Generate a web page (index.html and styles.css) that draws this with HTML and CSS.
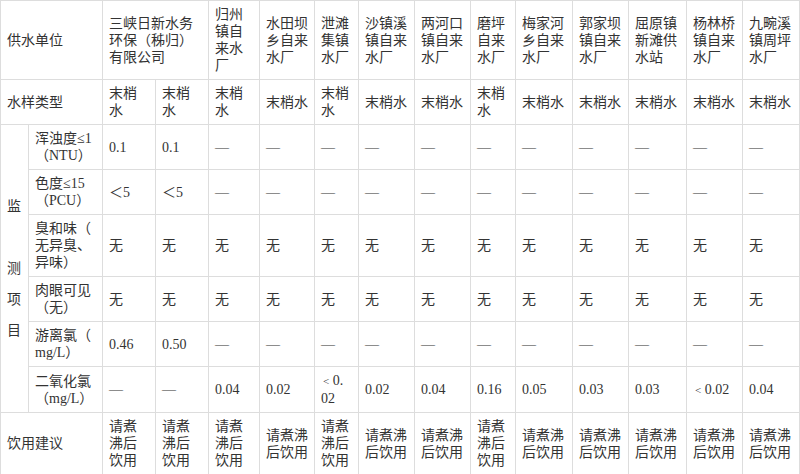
FILE: index.html
```html
<!DOCTYPE html>
<html lang="zh-CN">
<head>
<meta charset="utf-8">
<title>供水水质公示</title>
<link rel="stylesheet" href="styles.css">
</head>
<body>
<table class="quality">
  <colgroup>
    <col class="c28"><col class="c74">
    <col class="c53"><col class="c53">
    <col class="c51"><col class="c55"><col class="c44"><col class="c56"><col class="c56">
    <col class="c45"><col class="c57"><col class="c56"><col class="c58"><col class="c56"><col class="c57">
  </colgroup>
  <tbody>
    <tr>
      <td colspan="2">供水单位</td>
      <td colspan="2">三峡日新水务环保（秭归）有限公司</td>
      <td>归州镇自来水厂</td>
      <td>水田坝乡自来水厂</td>
      <td>泄滩集镇水厂</td>
      <td>沙镇溪镇自来水厂</td>
      <td>两河口镇自来水厂</td>
      <td>磨坪自来水厂</td>
      <td>梅家河乡自来水厂</td>
      <td>郭家坝镇自来水厂</td>
      <td>屈原镇新滩供水站</td>
      <td>杨林桥镇自来水厂</td>
      <td>九畹溪镇周坪水厂</td>
    </tr>
    <tr>
      <td colspan="2">水样类型</td>
      <td>末梢水</td><td>末梢水</td><td>末梢水</td><td>末梢水</td><td>末梢水</td><td>末梢水</td><td>末梢水</td>
      <td>末梢水</td><td>末梢水</td><td>末梢水</td><td>末梢水</td><td>末梢水</td><td>末梢水</td>
    </tr>
    <tr>
      <td rowspan="6" class="group">监<br><br>测<br>项<br>目</td>
      <td class="label">浑浊度≤1（NTU）</td>
      <td>0.1</td><td>0.1</td><td>—</td><td>—</td><td>—</td><td>—</td><td>—</td>
      <td>—</td><td>—</td><td>—</td><td>—</td><td>—</td><td>—</td>
    </tr>
    <tr>
      <td class="label">色度≤15（PCU）</td>
      <td>＜5</td><td>＜5</td><td>—</td><td>—</td><td>—</td><td>—</td><td>—</td>
      <td>—</td><td>—</td><td>—</td><td>—</td><td>—</td><td>—</td>
    </tr>
    <tr>
      <td class="label">臭和味（无异臭、异味）</td>
      <td>无</td><td>无</td><td>无</td><td>无</td><td>无</td><td>无</td><td>无</td>
      <td>无</td><td>无</td><td>无</td><td>无</td><td>无</td><td>无</td>
    </tr>
    <tr>
      <td class="label">肉眼可见（无）</td>
      <td>无</td><td>无</td><td>无</td><td>无</td><td>无</td><td>无</td><td>无</td>
      <td>无</td><td>无</td><td>无</td><td>无</td><td>无</td><td>无</td>
    </tr>
    <tr>
      <td class="label">游离氯（mg/L）</td>
      <td>0.46</td><td>0.50</td><td>—</td><td>—</td><td>—</td><td>—</td><td>—</td>
      <td>—</td><td>—</td><td>—</td><td>—</td><td>—</td><td>—</td>
    </tr>
    <tr>
      <td class="label">二氧化氯（mg/L）</td>
      <td>—</td><td>—</td><td>0.04</td><td>0.02</td><td><span class="lt">&lt;</span> 0.<wbr>02</td><td>0.02</td><td>0.04</td>
      <td>0.16</td><td>0.05</td><td>0.03</td><td>0.03</td><td><span class="lt">&lt;</span> 0.02</td><td>0.04</td>
    </tr>
    <tr>
      <td colspan="2">饮用建议</td>
      <td>请煮沸后饮用</td><td>请煮沸后饮用</td><td>请煮沸后饮用</td><td>请煮沸后饮用</td><td>请煮沸后饮用</td><td>请煮沸后饮用</td><td>请煮沸后饮用</td>
      <td>请煮沸后饮用</td><td>请煮沸后饮用</td><td>请煮沸后饮用</td><td>请煮沸后饮用</td><td>请煮沸后饮用</td><td>请煮沸后饮用</td>
    </tr>
  </tbody>
</table>
</body>
</html>
```

FILE: styles.css
```css
html, body {
  margin: 0;
  padding: 0;
  background: #fff;
}

.quality {
  border-collapse: collapse;
  table-layout: fixed;
  width: 799px;
  font-family: "Liberation Serif", "Noto Sans CJK SC", serif;
  font-size: 14px;
  line-height: 17px;
  color: #333;
}

.quality td {
  border: 1px solid #ddd;
  padding: 5px 6px;
  vertical-align: middle;
  text-align: left;
}

.quality .label {
  line-break: anywhere;
}

.quality .group {
  line-height: 31px;
  padding: 5px 6px;
}

.lt {
  font-size: 11px;
  padding-left: 2px;
}

.c28 { width: 28px; }
.c44 { width: 44px; }
.c45 { width: 45px; }
.c51 { width: 51px; }
.c53 { width: 53px; }
.c55 { width: 55px; }
.c56 { width: 56px; }
.c57 { width: 57px; }
.c58 { width: 58px; }
.c74 { width: 74px; }
```
